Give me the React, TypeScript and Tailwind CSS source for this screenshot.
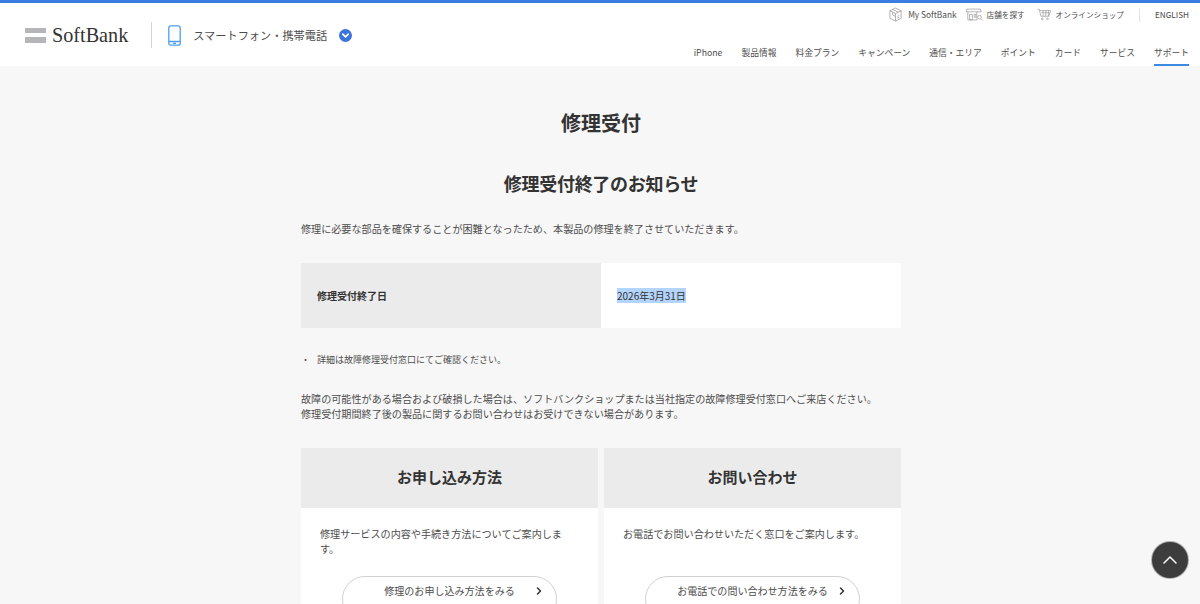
import React from 'react';
import { ChevronRight, ChevronUp, ChevronDown } from 'lucide-react';

const font = { fontFamily: '"Noto Sans CJK JP", "Liberation Sans", sans-serif' };

const navItems = ['iPhone', '製品情報', '料金プラン', 'キャンペーン', '通信・エリア', 'ポイント', 'カード', 'サービス', 'サポート'];

const CubeIcon = () => (
  <svg viewBox="0 0 16 16" className="w-[15px] h-[15px] text-[#999]" fill="none" stroke="currentColor" strokeWidth="0.8">
    <path d="M8 1l6 3v8l-6 3-6-3V4z" />
    <path d="M2 4l6 3 6-3M8 7v8M5 2.5l6 3M5 5.5v3l3 1.5" />
    <path d="M10 10l2-1M10 12l2-1" />
  </svg>
);

const ShopIcon = () => (
  <svg viewBox="0 0 20 14" className="w-[18px] h-[13px] text-[#999]" fill="none" stroke="currentColor" strokeWidth="0.8">
    <path d="M1 1h15l1 3H0.5zM2 4v9h10V4M4 7h3v6H4zM9 7h2v3H9z" />
    <circle cx="15" cy="10" r="2" />
    <path d="M16.5 11.5l2 2" />
  </svg>
);

const CartIcon = () => (
  <svg viewBox="0 0 16 14" className="w-[14px] h-[13px] text-[#999]" fill="none" stroke="currentColor" strokeWidth="0.8">
    <path d="M0.5 1h2l2 8h9l2-6.5H3" />
    <path d="M5 5h9M7 2.5V9M10 2.5V9M13 2.5V9" />
    <circle cx="6" cy="12" r="1" />
    <circle cx="12" cy="12" r="1" />
  </svg>
);

const PhoneIcon = () => (
  <svg viewBox="0 0 13 21" className="w-[13px] h-[21px] text-[#4f9fee]" fill="none" stroke="currentColor" strokeWidth="1.3">
    <rect x="0.8" y="0.8" width="11.4" height="19.4" rx="2" />
    <path d="M0.8 16.5h11.4M5 18.4h3" />
  </svg>
);

const Card = ({ title, body, button }: { title: string; body: string; button: string }) => (
  <div className="flex-1 bg-white">
    <div className="h-[60px] pb-[2px] bg-[#ebebeb] flex items-center justify-center text-[15px] font-bold text-[#333]">{title}</div>
    <div className="px-[19px] pt-[18px] pb-10">
      <p className="text-[10.1px] leading-[15px] h-[30px] text-[#4d4d4d]">{body}</p>
      <a className="mt-[20px] mx-auto w-[215px] h-[46px] rounded-full border border-[#d0d0d0] bg-white block text-center text-[10.05px] leading-[28px] text-[#4d4d4d] relative">
        <span>{button}</span>
        <ChevronRight className="absolute right-[11px] top-[8px] w-[12px] h-[12px] text-[#333]" strokeWidth={3} />
      </a>
    </div>
  </div>
);

export default function App() {
  return (
    <div className="h-screen overflow-hidden bg-[#f7f7f7] relative" style={font}>
      <header className="h-[66px] bg-white border-t-[3px] border-[#3b7de0] flex justify-between">
        <div className="flex items-center pl-[25px] pt-[1px]">
          <div className="flex flex-col gap-[4px] w-[21px]">
            <div className="h-[5px] bg-[#b4b6b8]" />
            <div className="h-[6px] bg-[#b4b6b8]" />
          </div>
          <span className="ml-[6px] text-[20.2px] leading-none text-[#333]" style={{ fontFamily: '"Liberation Serif", serif' }}>SoftBank</span>
          <div className="ml-[23px] w-px h-[26px] bg-[#d5d5d5]" />
          <div className="ml-[16px]"><PhoneIcon /></div>
          <span className="ml-[12px] text-[11.2px] text-[#4d4d4d]">スマートフォン・携帯電話</span>
          <div className="ml-[12px] w-[13px] h-[13px] rounded-full bg-[#3b74dc] flex items-center justify-center">
            <ChevronDown className="w-[11px] h-[11px] text-white" strokeWidth={3.5} />
          </div>
        </div>
        <div className="flex flex-col items-end pr-[11px]">
          <div className="h-[23px] flex items-center text-[7.6px] text-[#4d4d4d]">
            <div className="flex items-center gap-[5px]"><CubeIcon /><span className="text-[8.3px]">My SoftBank</span></div>
            <div className="flex items-center gap-[3px] ml-[9px]"><ShopIcon /><span>店舗を探す</span></div>
            <div className="flex items-center gap-[5px] ml-[12px]"><CartIcon /><span>オンラインショップ</span></div>
            <div className="ml-[15px] w-px h-[14px] bg-[#e5e5e5]" />
            <span className="ml-[15px] text-[8.2px]">ENGLISH</span>
          </div>
          <nav className="mt-[18px] flex gap-[19px] text-[8.75px] text-[#4d4d4d]">
            {navItems.map((item) => (
              <a key={item} className={`h-[22px] leading-[17px] ${item === 'サポート' ? 'border-b-2 border-[#3b88e0]' : ''}`}>{item}</a>
            ))}
          </nav>
        </div>
      </header>

      <main className="w-[600px] ml-[301px]">
        <h1 className="mt-[43px] text-center text-[20px] leading-[28px] font-bold text-[#333]">修理受付</h1>
        <h2 className="mt-[33px] text-center text-[18px] leading-[26px] font-bold text-[#333] tracking-[-0.3px]">修理受付終了のお知らせ</h2>
        <p className="mt-[25px] text-[10.1px] leading-[15px] text-[#4d4d4d]">修理に必要な部品を確保することが困難となったため、本製品の修理を終了させていただきます。</p>

        <div className="mt-[27px] flex h-[65px] text-[10px] text-[#333]">
          <div className="w-[300px] pb-[1px] bg-[#ebebeb] flex items-center pl-[16px] font-bold">修理受付終了日</div>
          <div className="w-[300px] bg-white flex items-center pl-[16px]">
            <span className="bg-[#b3d4fc] leading-[15px]">2026年3月31日</span>
          </div>
        </div>

        <div className="mt-[24px] flex text-[9px] leading-[15px] text-[#4d4d4d]">
          <span className="w-[16px]">・</span>
          <span>詳細は故障修理受付窓口にてご確認ください。</span>
        </div>

        <p className="mt-[24px] text-[10.1px] leading-[15px] text-[#4d4d4d]">
          故障の可能性がある場合および破損した場合は、ソフトバンクショップまたは当社指定の故障修理受付窓口へご来店ください。<br />
          修理受付期間終了後の製品に関するお問い合わせはお受けできない場合があります。
        </p>

        <div className="mt-[27px] flex gap-[6px]">
          <Card title="お申し込み方法" body="修理サービスの内容や手続き方法についてご案内します。" button="修理のお申し込み方法をみる" />
          <Card title="お問い合わせ" body="お電話でお問い合わせいただく窓口をご案内します。" button="お電話での問い合わせ方法をみる" />
        </div>
      </main>

      <button className="fixed right-[11px] bottom-[25px] w-[38px] h-[38px] rounded-full bg-[#3d3d3d] border border-white/60 flex items-center justify-center">
        <ChevronUp className="w-[24px] h-[24px] text-white" strokeWidth={1.5} />
      </button>
    </div>
  );
}
